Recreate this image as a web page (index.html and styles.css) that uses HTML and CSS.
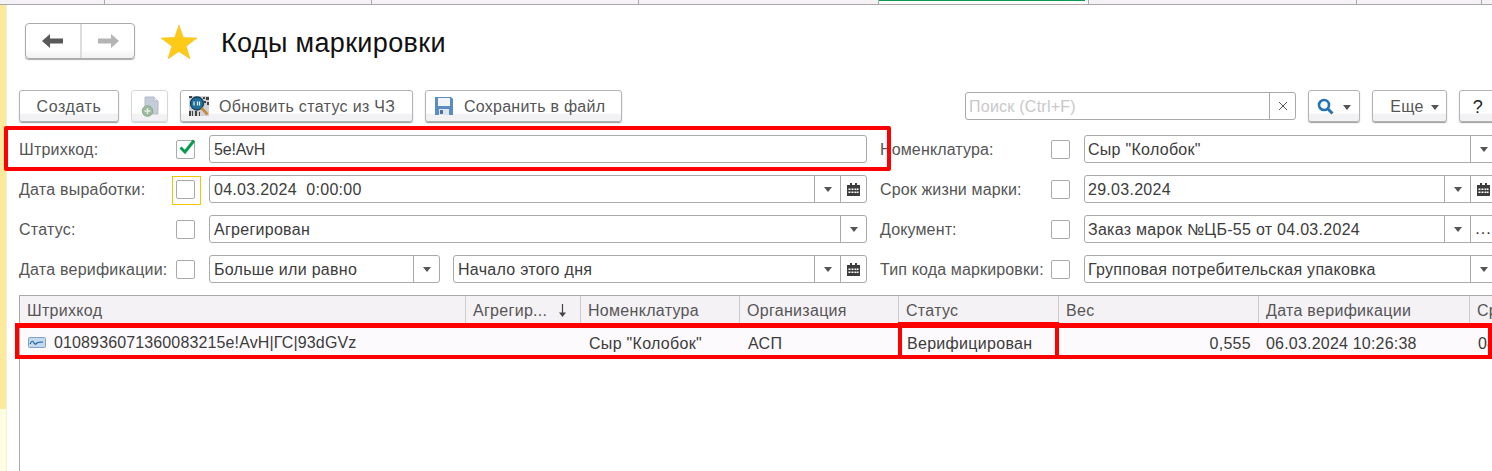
FILE: index.html
```html
<!DOCTYPE html>
<html lang="ru">
<head>
<meta charset="utf-8">
<title>Коды маркировки</title>
<link rel="stylesheet" href="styles.css">
</head>
<body>
<div class="tabs">
  <div class="tab t1"></div><div class="tab t2"></div><div class="tab t3"></div><div class="tab t4"></div>
  <div class="tab t5 active"></div><div class="tab t6"></div><div class="tab t7"></div>
</div>
<div class="workspace">
  <div class="rail"><div class="rail-top"></div><div class="rail-bottom"></div></div>
  <main class="content">
    <header class="head">
      <div class="nav">
        <button class="nav-btn nav-left"><svg width="22" height="16" viewBox="0 0 22 16"><path d="M0 8 8 1v4.500h13v5H8V15z" fill="#595959"/></svg></button>
        <button class="nav-btn"><svg width="22" height="16" viewBox="0 0 22 16"><path d="M22 8 14 1v4.500H1v5h13V15z" fill="#b4b4b4"/></svg></button>
      </div>
      <svg class="star" width="36" height="34" viewBox="0 0 36 34"><path d="M18 0l4.300 12.400L36 13l-10.800 8.200L29.100 34 18 26.400 6.900 34l3.900-12.800L0 13l13.700-.6z" fill="#fdca17" stroke="#f3b90f" stroke-width=".5"/></svg>
      <h1 class="title">Коды маркировки</h1>
    </header>

    <div class="toolbar">
      <button class="btn w-create">Создать</button>
      <button class="btn w-icon">
        <svg width="18" height="21" viewBox="0 0 18 21"><path d="M4 1h9l4 4v13H4z" fill="#c3ccd8" stroke="#b3bdc9"/><path d="M13 1v4h4" fill="#e6eaef" stroke="#b3bdc9"/><circle cx="6.500" cy="15" r="5.300" fill="#9fbb9f" stroke="#8dab8d"/><path d="M3.500 15h6M6.500 12v6" stroke="#e7f0e7" stroke-width="1.400"/></svg>
      </button>
      <button class="btn w-update">
        <svg width="20" height="20" viewBox="0 0 20 20"><rect width="20" height="20" fill="#d2d2d2"/><path d="M14 1h2v2h-2zM17 1h3v3h-3zM15 5h2v2h-2zM18 6h2v3h-2zM0 0h3v2H0zM0 15h2v5H0zM3 15h1v5H3zM6 15h2v5H6zM10 16h1v4h-1z" fill="#444"/><circle cx="8" cy="7.500" r="6.500" fill="#1f6f9c" stroke="#143f5c" stroke-width="1.300"/><path d="M5 5.500v4M8.500 5.500v4M10.500 5.500v4" stroke="#e3f0f8" stroke-width="1.200"/><path d="M12.500 12l6 6.500" stroke="#c58a3c" stroke-width="2.600"/></svg>
        <span>Обновить статус из ЧЗ</span>
      </button>
      <button class="btn w-save">
        <svg width="18" height="18" viewBox="0 0 18 18"><path d="M0 0h16l2 2v16H0z" fill="#5b8dc4"/><rect x="3" y="1" width="12" height="8" fill="#f2f5f8"/><rect x="4" y="12" width="10" height="6" fill="#dfe5ec"/><rect x="5" y="13" width="3" height="4" fill="#50709a"/></svg>
        <span>Сохранить в файл</span>
      </button>
      <div class="search">
        <span class="search-text">Поиск (Ctrl+F)</span>
        <span class="search-clear"><svg width="10" height="10" viewBox="0 0 10 10"><path d="M1 1l8 8M9 1l-8 8" stroke="#555" stroke-width="1"/></svg></span>
      </div>
      <button class="btn w-find">
        <svg width="17" height="17" viewBox="0 0 17 17"><circle cx="7" cy="7" r="5" fill="none" stroke="#2273b5" stroke-width="2.600"/><path d="M10.500 10.500l5 5" stroke="#2273b5" stroke-width="3"/></svg>
        <i class="tri"></i>
      </button>
      <button class="btn w-more"><span>Еще</span><i class="tri"></i></button>
      <button class="btn w-help">?</button>
    </div>

    <section class="form">
      <div class="col col-left">
        <div class="row">
          <span class="label">Штрихкод:</span>
          <span class="check"><svg width="18" height="18" viewBox="0 0 18 18"><path d="M2.500 9.500 7 14 16 2.500" fill="none" stroke="#0c9a4e" stroke-width="3"/></svg></span>
          <div class="field"><span class="value tight">5e!AvH</span></div>
        </div>
        <div class="row">
          <span class="label">Дата выработки:</span>
          <span class="check focus"></span>
          <div class="field"><span class="value">04.03.2024&nbsp; 0:00:00</span><span class="fbtn"><i class="tri"></i></span><span class="fbtn"><svg class="cal" width="13" height="13" viewBox="0 0 13 13"><use href="#cal"/></svg></span></div>
        </div>
        <div class="row">
          <span class="label">Статус:</span>
          <span class="check"></span>
          <div class="field"><span class="value">Агрегирован</span><span class="fbtn"><i class="tri"></i></span></div>
        </div>
        <div class="row">
          <span class="label">Дата верификации:</span>
          <span class="check"></span>
          <div class="field field-short"><span class="value">Больше или равно</span><span class="fbtn"><i class="tri"></i></span></div>
          <div class="field"><span class="value">Начало этого дня</span><span class="fbtn"><i class="tri"></i></span><span class="fbtn"><svg class="cal" width="13" height="13" viewBox="0 0 13 13"><use href="#cal"/></svg></span></div>
        </div>
      </div>
      <div class="col col-right">
        <div class="row">
          <span class="label">Номенклатура:</span>
          <span class="check"></span>
          <div class="field"><span class="value">Сыр "Колобок"</span><span class="fbtn"><i class="tri"></i></span></div>
        </div>
        <div class="row">
          <span class="label">Срок жизни марки:</span>
          <span class="check"></span>
          <div class="field"><span class="value">29.03.2024</span><span class="fbtn"><i class="tri"></i></span><span class="fbtn"><svg class="cal" width="13" height="13" viewBox="0 0 13 13"><use href="#cal"/></svg></span></div>
        </div>
        <div class="row">
          <span class="label">Документ:</span>
          <span class="check"></span>
          <div class="field"><span class="value">Заказ марок №ЦБ-55 от 04.03.2024</span><span class="fbtn"><i class="tri"></i></span><span class="fbtn dots">...</span></div>
        </div>
        <div class="row">
          <span class="label">Тип кода маркировки:</span>
          <span class="check"></span>
          <div class="field"><span class="value">Групповая потребительская упаковка</span><span class="fbtn"><i class="tri"></i></span></div>
        </div>
      </div>
    </section>

    <section class="grid">
      <div class="grid-head">
        <div class="th">Штрихкод</div>
        <div class="th th-sort"><span>Агрегир...</span><svg width="9" height="13" viewBox="0 0 9 13"><path d="M4.500 0v10" stroke="#444" stroke-width="1.200"/><path d="M1 8.500h7L4.500 13z" fill="#444"/></svg></div>
        <div class="th">Номенклатура</div>
        <div class="th">Организация</div>
        <div class="th">Статус</div>
        <div class="th">Вес</div>
        <div class="th">Дата верификации</div>
        <div class="th">Срок</div>
      </div>
      <div class="grid-row">
        <div class="td td-first"><svg width="18" height="11" viewBox="0 0 18 11"><rect x=".5" y=".5" width="17" height="10" rx="1" fill="#c3d9ee" stroke="#7ea3c6"/><path d="M2 7c2-4 3-3 4-1s2 1 3 0 3-1 6-1" fill="none" stroke="#1e5f9e" stroke-width="1.200"/></svg><span class="code">0108936071360083215e!AvH|ГС|93dGVz</span></div>
        <div class="td"></div>
        <div class="td">Сыр "Колобок"</div>
        <div class="td">АСП</div>
        <div class="td">Верифицирован</div>
        <div class="td td-num">0,555</div>
        <div class="td td-date">06.03.2024 10:26:38</div>
        <div class="td">04.03.2024</div>
      </div>
    </section>
  </main>
</div>

<div class="mark mark-barcode"></div>
<div class="mark mark-row"></div>
<div class="mark mark-status"></div>

<svg class="defs" width="0" height="0"><symbol id="cal" viewBox="0 0 13 13"><path d="M0 2h13v11H0z" fill="#3c3c3c"/><path d="M3 0h2v3H3zM8 0h2v3H8z" fill="#3c3c3c"/><path d="M1.500 5.500h2v1.500h-2zM4.500 5.500h2v1.500h-2zM7.500 5.500h2v1.500h-2zM10 5.500h1.500v1.500H10zM1.500 8.500h2V10h-2zM4.500 8.500h2V10h-2zM7.500 8.500h2V10h-2zM10 8.500h1.500V10H10z" fill="#fff"/></symbol></svg>
</body>
</html>
```
FILE: styles.css
```css
* { box-sizing: border-box; }
html, body { margin: 0; padding: 0; width: 1492px; height: 471px; overflow: hidden; background: #fff; }
body { font-family: "Liberation Sans", Arial, sans-serif; font-size: 16px; color: #333; position: relative; }
button { font: inherit; color: inherit; margin: 0; padding: 0; }
.defs { position: absolute; }

.tabs { display: flex; height: 5px; background: #f5f2f5; border-bottom: 1px solid #a8a8a8; }
.tab { height: 4px; border-right: 1px solid #a8a8a8; flex: none; }
.t1 { width: 105px; } .t2 { width: 267px; } .t3 { width: 267px; } .t4 { width: 240px; }
.t5 { width: 210px; } .t6 { width: 268px; } .t7 { width: 125px; }
.active { background: #fff; position: relative; }
.active::before { content: ""; position: absolute; left: 0; top: 0; width: 206px; height: 1px; background: #0a9a52; }

.workspace { display: flex; height: 466px; }
.rail { width: 7px; flex: none; display: flex; flex-direction: column; border-right: 1px solid #f2efe0; }
.rail-top { height: 404px; background: #fde99b; }
.rail-bottom { flex: 1; background: #fffde0; }
.content { flex: none; width: 1490px; padding: 18px 0 0 12px; display: flex; flex-direction: column; }

.head { display: flex; align-items: center; height: 36px; }
.nav { display: flex; margin-left: 6px; width: 110px; height: 36px; border: 1px solid #ababab; border-radius: 4px; box-shadow: 0 1px 1px #a8a8a8; background: linear-gradient(#fff 72%, #f2f1f3); overflow: hidden; }
.nav-btn { flex: 1; border: 0; background: none; display: flex; align-items: center; justify-content: center; }
.nav-left { flex: none; width: 56px; border-right: 2px solid #dcdcdc; }
.star { margin-left: 26px; margin-top: 2px; flex: none; }
.title { margin: 3px 0 0 24px; font-size: 27px; font-weight: 400; color: #111; letter-spacing: .35px; line-height: 36px; }

.toolbar { display: flex; align-items: flex-start; gap: 12px; margin-top: 31px; height: 33px; width: 1478px; }
.btn { height: 32px; flex: none; display: flex; align-items: center; justify-content: center; padding-top: 2px; background: linear-gradient(#fff 74%, #f2f1f3 78%); border: 1px solid #b4b4b4; border-radius: 3px; box-shadow: 0 1px 1px #9a9a9a; letter-spacing: .3px; color: #555; }
.btn svg { margin-top: -2px; }
.w-create { width: 100px; letter-spacing: .6px; }
.w-icon { width: 37px; border-color: #d8d8d8; box-shadow: 0 1px 1px #cfcfcf; padding-left: 1px; }
.w-update { width: 233px; gap: 10px; justify-content: flex-start; padding-left: 8px; letter-spacing: .33px; }
.w-save { width: 197px; gap: 11px; justify-content: flex-start; padding-left: 9px; letter-spacing: .25px; }
.w-find { width: 52px; gap: 9px; }
.w-more { width: 75px; gap: 7px; padding-left: 10px; }
.w-help { width: 38px; font-size: 18px; color: #222; }

.search { margin-left: auto; margin-top: 2px; width: 331px; height: 28px; border: 1px solid #aaa; border-radius: 3px; display: flex; background: #fff; }
.search-text { flex: 1; padding-left: 3px; line-height: 28px; color: #c8c8c8; letter-spacing: .25px; }
.search-clear { width: 26px; border-left: 1px solid #aaa; display: flex; align-items: center; justify-content: center; }

.tri { display: block; width: 0; height: 0; border-left: 4px solid transparent; border-right: 4px solid transparent; border-top: 5px solid #555; flex: none; }

.form { display: flex; gap: 13px; margin-top: 12px; width: 1478px; }
.col { display: flex; flex-direction: column; gap: 12px; flex: none; }
.col-left { width: 848px; }
.col-right { width: 617px; }
.row { display: flex; align-items: center; height: 28px; }
.label { flex: none; white-space: nowrap; color: #555; letter-spacing: .22px; padding-top: 2px; }
.col-left .label { width: 157px; }
.col-right .label { width: 171px; letter-spacing: .14px; }
.check { flex: none; width: 19px; height: 19px; border: 1px solid #aaa; border-radius: 2px; margin-right: 14px; display: flex; align-items: center; justify-content: center; background: #fff; position: relative; }
.check svg { position: absolute; left: 1px; top: -3px; }
.focus::after { content: ""; position: absolute; left: -5px; top: -5px; width: 27px; height: 27px; border: 1px solid #f7c600; }
.field { flex: 1; min-width: 0; height: 28px; border: 1px solid #aaa; border-radius: 3px; display: flex; background: #fff; }
.field-short { flex: none; width: 231px; margin-right: 13px; }
.value { flex: 1; padding-left: 4px; line-height: 28px; color: #3c3c3c; letter-spacing: .28px; white-space: nowrap; overflow: hidden; }
.tight { letter-spacing: -.2px; }
.col-right .value { padding-left: 3px; }
.fbtn { width: 26px; flex: none; border-left: 1px solid #aaa; display: flex; align-items: center; justify-content: center; }
.dots { letter-spacing: 1px; color: #333; line-height: 26px; align-items: flex-end; }

.grid { margin-top: 12px; flex: 1; width: 1490px; border-top: 1px solid #aaa; border-left: 1px solid #aaa; }
.grid-head, .grid-row { display: grid; grid-template-columns: 446px 115px 159px 159px 160px 200px 211px 60px; }
.grid-head { height: 29px; background: #f5f2f5; }
.grid-row { height: 30px; margin-top: 1px; background: #fdfafd; border-top: 1px solid #ccc; }
.th { border-right: 1px solid #ccc; padding-left: 7px; line-height: 30px; color: #555; letter-spacing: .3px; white-space: nowrap; overflow: hidden; }
.th:last-child, .td:last-child { border-right: 0; }
.th-sort { display: flex; align-items: center; gap: 11px; }
.td { padding-left: 8px; line-height: 31px; padding-top: 1px; color: #3c3c3c; letter-spacing: .3px; white-space: nowrap; overflow: hidden; }
.td-first { display: flex; align-items: center; gap: 8px; }
.code { letter-spacing: .13px; }
.td-date { letter-spacing: .2px; padding-left: 7px; }
.td-num { text-align: right; padding: 1px 8px 0 0; }

.mark { position: absolute; border: 4px solid #f00; pointer-events: none; }
.mark-barcode { left: 4px; top: 126px; width: 887px; height: 45px; border-radius: 2px; }
.mark-row { left: 15px; top: 323px; width: 1477px; height: 36px; border-width: 5px 4px 4px; }
.mark-status { left: 898px; top: 322px; width: 161px; height: 37px; border-width: 5px 4px 4px; }
```
